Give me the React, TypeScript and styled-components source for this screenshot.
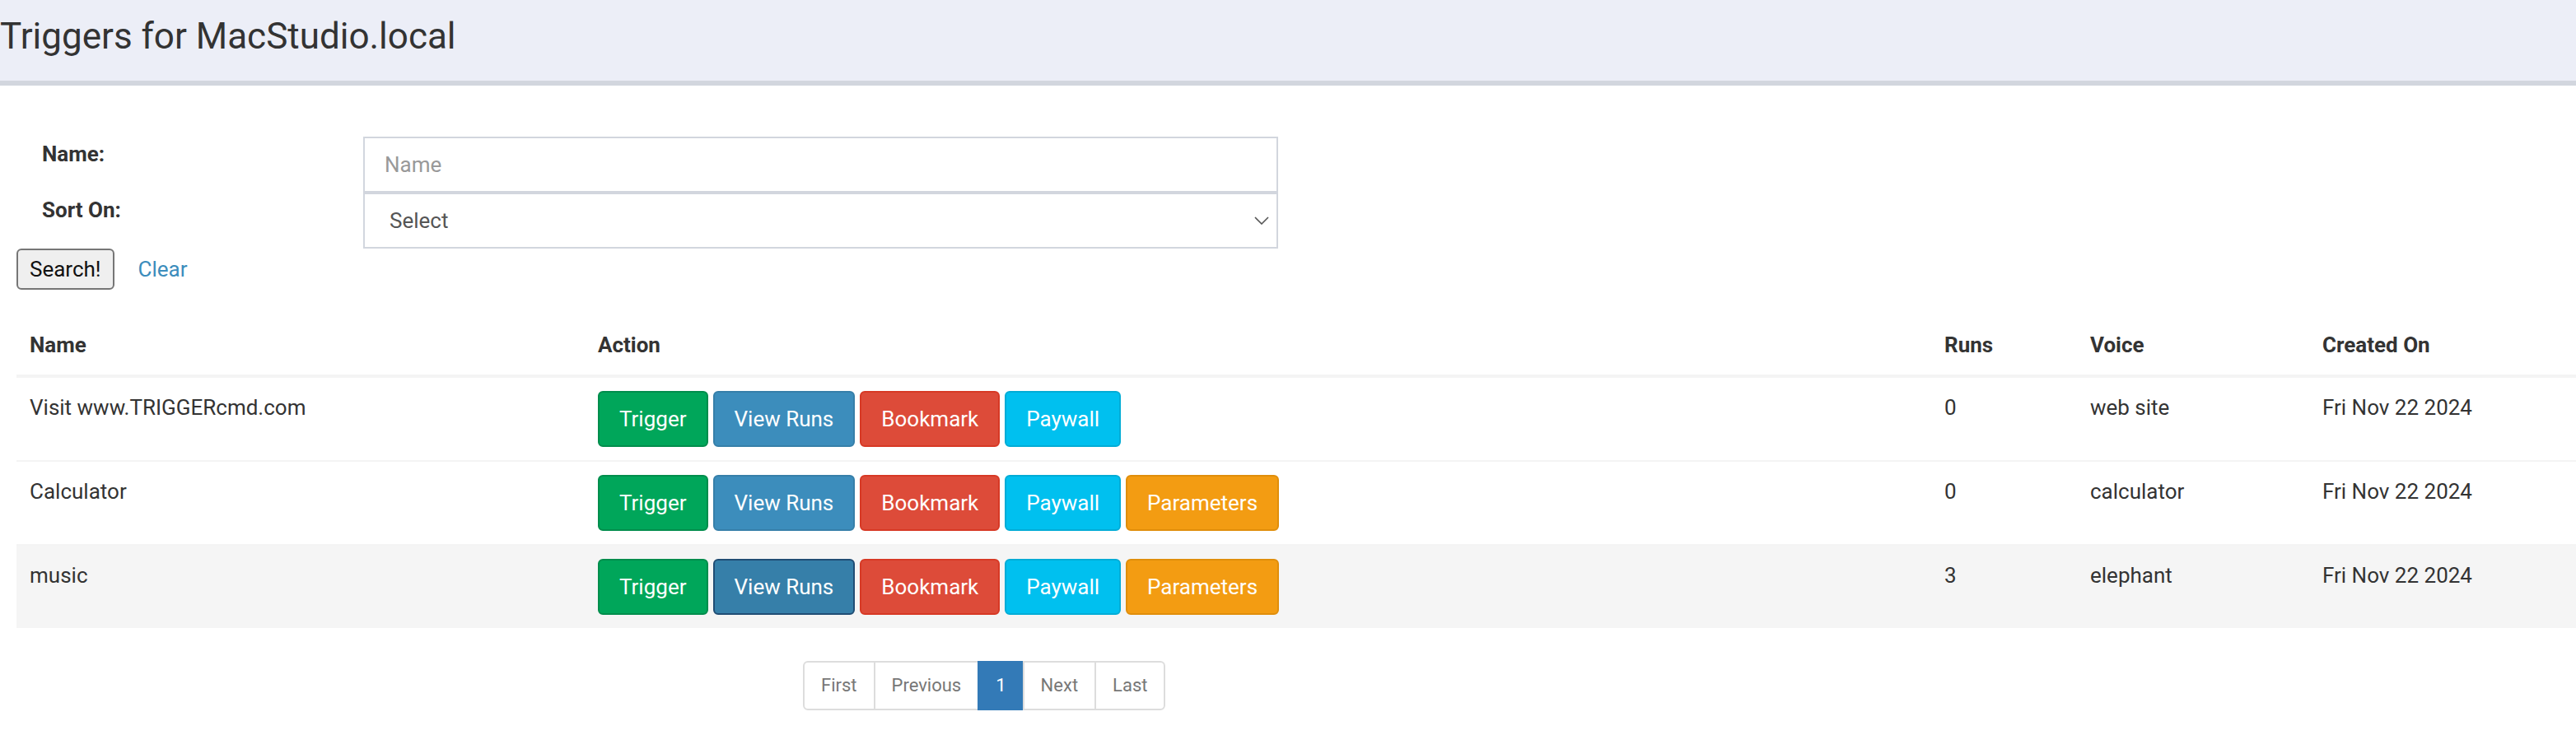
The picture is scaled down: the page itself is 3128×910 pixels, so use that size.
import React from 'react';
import styled, { createGlobalStyle, css } from 'styled-components';

const GlobalStyle = createGlobalStyle`
  html, body { margin: 0; padding: 0; background: #fff; }
  body {
    font-family: Roboto, "Liberation Sans", Arial, sans-serif;
    color: #333;
    font-size: 26px;
  }
  * { box-sizing: border-box; }
`;

const Header = styled.header`
  height: 104px;
  background: #eceef7;
  border-bottom: 6px solid #d2d6de;
`;

const Title = styled.h1`
  margin: 0;
  padding-top: 22px;
  font-size: 44px;
  line-height: 44px;
  font-weight: 400;
  color: #333;
`;

const Main = styled.main`
  padding: 0 0 0 20px;
`;

const FilterForm = styled.div`
  display: grid;
  grid-template-columns: 421px 1111px;
  margin-top: 62px;
`;

const FieldLabel = styled.label`
  padding: 1px 0 0 31px;
  line-height: 40px;
  font-weight: 700;
  color: #333;
`;

const TextInput = styled.input`
  height: 68px;
  width: 100%;
  border: 2px solid #d2d6de;
  padding: 0 24px;
  font: inherit;
  font-size: 26px;
  color: #555;
  outline: none;
  &::placeholder { color: #999; }
`;

const SelectBox = styled.div`
  position: relative;
  height: 68px;
`;

const Select = styled.select`
  appearance: none;
  width: 100%;
  height: 100%;
  border: 2px solid #d2d6de;
  border-radius: 0;
  padding: 0 60px 0 30px;
  background: #fff;
  font: inherit;
  font-size: 26px;
  color: #555;
  outline: none;
`;

const Chevron = styled.svg`
  position: absolute;
  right: 11px;
  top: 50%;
  transform: translateY(-50%);
  pointer-events: none;
`;

const SearchRow = styled.div`
  display: flex;
  align-items: center;
  gap: 29px;
  height: 50px;
`;

const SearchButton = styled.button`
  height: 50px;
  padding: 2px 14px;
  line-height: 42px;
  border: 2px solid #767676;
  border-radius: 6px;
  background: #efefef;
  font: inherit;
  font-size: 26px;
  color: #111;
`;

const ClearLink = styled.a`
  color: #3c8dbc;
  text-decoration: none;
  line-height: 40px;
`;

const DataTable = styled.table`
  margin-top: 31px;
  width: 3108px;
  border-collapse: collapse;
  border-spacing: 0;
  table-layout: fixed;
`;

const Col = styled.col<{ $w: number }>`
  width: ${(p) => p.$w}px;
`;

const HeadCell = styled.th`
  text-align: left;
  font-weight: 700;
  padding: 16px;
  line-height: 40px;
  border-bottom: 4px solid #f4f4f4;
  color: #333;
`;

const Row = styled.tr<{ $hover?: boolean }>`
  background: ${(p) => (p.$hover ? '#f5f5f5' : 'transparent')};
`;

const Cell = styled.td`
  padding: 16px;
  line-height: 40px;
  vertical-align: top;
  border-top: 2px solid #f4f4f4;
  color: #333;
`;

const ButtonGroup = styled.div`
  display: flex;
  gap: 6px;
`;

type Variant = 'success' | 'primary' | 'danger' | 'info' | 'warning';

const palette: Record<Variant, { bg: string; border: string; hoverBg: string; hoverBorder: string }> = {
  success: { bg: '#00a65a', border: '#008d4c', hoverBg: '#008d4c', hoverBorder: '#398439' },
  primary: { bg: '#3c8dbc', border: '#367fa9', hoverBg: '#367fa9', hoverBorder: '#204d74' },
  danger: { bg: '#dd4b39', border: '#d73925', hoverBg: '#d73925', hoverBorder: '#ac2925' },
  info: { bg: '#00c0ef', border: '#00acd6', hoverBg: '#00acd6', hoverBorder: '#269abc' },
  warning: { bg: '#f39c12', border: '#e08e0b', hoverBg: '#e08e0b', hoverBorder: '#d58512' },
};

const ActionButton = styled.button<{ $variant: Variant; $hover?: boolean }>`
  height: 68px;
  padding: 12px 24px;
  line-height: 40px;
  border-radius: 6px;
  font: inherit;
  font-size: 26px;
  color: #fff;
  white-space: nowrap;
  ${(p) => {
    const c = palette[p.$variant];
    return p.$hover
      ? css`background: ${c.hoverBg}; border: 2px solid ${c.hoverBorder};`
      : css`background: ${c.bg}; border: 2px solid ${c.border};`;
  }}
`;

const Pagination = styled.ul`
  display: flex;
  list-style: none;
  margin: 40px 0 0 955px;
  padding: 0;
`;

const PageItem = styled.li<{ $active?: boolean }>`
  height: 60px;
  padding: 10px 20px;
  line-height: 36px;
  font-size: 22px;
  border: 2px solid ${(p) => (p.$active ? '#337ab7' : '#ddd')};
  background: ${(p) => (p.$active ? '#337ab7' : '#fff')};
  color: ${(p) => (p.$active ? '#fff' : '#777')};
  margin-left: -2px;
  &:first-child {
    margin-left: 0;
    border-radius: 6px 0 0 6px;
  }
  &:last-child {
    border-radius: 0 6px 6px 0;
  }
`;

type Trig = {
  name: string;
  params: boolean;
  runs: number;
  voice: string;
  created: string;
  hover?: boolean;
};

const triggers: Trig[] = [
  { name: 'Visit www.TRIGGERcmd.com', params: false, runs: 0, voice: 'web site', created: 'Fri Nov 22 2024' },
  { name: 'Calculator', params: true, runs: 0, voice: 'calculator', created: 'Fri Nov 22 2024' },
  { name: 'music', params: true, runs: 3, voice: 'elephant', created: 'Fri Nov 22 2024', hover: true },
];

export default function App() {
  return (
    <>
      <GlobalStyle />
      <Header>
        <Title>Triggers for MacStudio.local</Title>
      </Header>
      <Main>
        <FilterForm>
          <FieldLabel>Name:</FieldLabel>
          <TextInput placeholder="Name" />
          <FieldLabel>Sort On:</FieldLabel>
          <SelectBox>
            <Select defaultValue="">
              <option value="">Select</option>
            </Select>
            <Chevron width="18" height="10" viewBox="0 0 18 10">
              <polyline points="1,1 9,9 17,1" fill="none" stroke="#555" strokeWidth="1.6" />
            </Chevron>
          </SelectBox>
        </FilterForm>
        <SearchRow>
          <SearchButton>Search!</SearchButton>
          <ClearLink href="#">Clear</ClearLink>
        </SearchRow>
        <DataTable>
          <colgroup>
            <Col $w={690} />
            <Col $w={1635} />
            <Col $w={177} />
            <Col $w={282} />
            <Col $w={324} />
          </colgroup>
          <thead>
            <tr>
              <HeadCell>Name</HeadCell>
              <HeadCell>Action</HeadCell>
              <HeadCell>Runs</HeadCell>
              <HeadCell>Voice</HeadCell>
              <HeadCell>Created On</HeadCell>
            </tr>
          </thead>
          <tbody>
            {triggers.map((t) => (
              <Row key={t.name} $hover={t.hover}>
                <Cell>{t.name}</Cell>
                <Cell>
                  <ButtonGroup>
                    <ActionButton $variant="success">Trigger</ActionButton>
                    <ActionButton $variant="primary" $hover={t.hover}>View Runs</ActionButton>
                    <ActionButton $variant="danger">Bookmark</ActionButton>
                    <ActionButton $variant="info">Paywall</ActionButton>
                    {t.params && <ActionButton $variant="warning">Parameters</ActionButton>}
                  </ButtonGroup>
                </Cell>
                <Cell>{t.runs}</Cell>
                <Cell>{t.voice}</Cell>
                <Cell>{t.created}</Cell>
              </Row>
            ))}
          </tbody>
        </DataTable>
        <Pagination>
          <PageItem>First</PageItem>
          <PageItem>Previous</PageItem>
          <PageItem $active>1</PageItem>
          <PageItem>Next</PageItem>
          <PageItem>Last</PageItem>
        </Pagination>
      </Main>
    </>
  );
}
